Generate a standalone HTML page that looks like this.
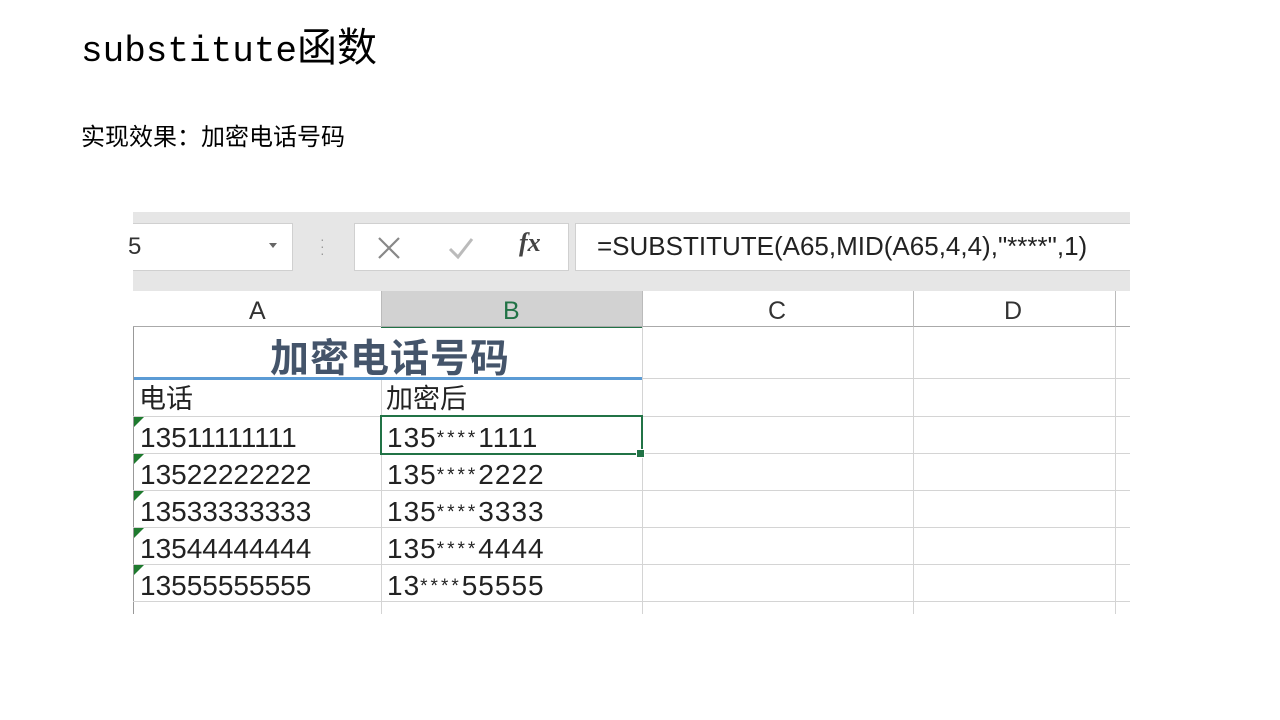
<!DOCTYPE html>
<html><head><meta charset="utf-8"><style>
body{margin:0;width:1280px;height:720px;background:#fff;position:relative;overflow:hidden;font-family:"Liberation Sans","Noto Sans CJK SC",sans-serif}
.a{position:absolute;white-space:nowrap}
.hl{position:absolute;height:1px;background:#d4d4d4}
.vl{position:absolute;width:1px;background:#d4d4d4}
.tri{position:absolute;width:0;height:0;border-top:10px solid #1e7a2e;border-right:10px solid transparent;left:134px}
.n{font-size:28px;color:#222;line-height:37px}
.s{font-size:19px;vertical-align:3px;letter-spacing:3px}
.b{letter-spacing:1px}
#clip{position:absolute;left:0;top:0;width:1130px;height:720px;overflow:hidden}
</style></head><body>
<div class="a" style="left:81px;top:15px;font-family:'Liberation Mono','Noto Sans CJK SC',monospace;font-size:36px;color:#000">substitute<span style="font-size:40px">函数</span></div>
<div class="a" style="left:81px;top:117px;font-size:24px;color:#000">实现效果：加密电话号码</div>
<div id="clip">
<div class="a" style="left:133px;top:212px;width:997px;height:79px;background:#e6e6e6"></div>
<div class="a" style="left:133px;top:223px;width:159px;height:46px;background:#fff;border:1px solid #d0d0d0;border-left:none"></div>
<div class="a" style="left:128px;top:233px;font-size:24px;color:#333">5</div>
<div class="a" style="left:269px;top:243px;border-top:5px solid #666;border-left:4px solid transparent;border-right:4px solid transparent"></div>
<div class="a" style="left:320px;top:236px;color:#999;font-size:14px;line-height:7px">·<br>·<br>·</div>
<div class="a" style="left:354px;top:223px;width:213px;height:46px;background:#fff;border:1px solid #d0d0d0"></div>
<svg class="a" style="left:376px;top:235px" width="26" height="26"><path d="M3 3L23 23M23 3L3 23" stroke="#888" stroke-width="2.2"/></svg>
<svg class="a" style="left:447px;top:235px" width="28" height="26"><path d="M3 14L11 22L25 4" stroke="#bbb" stroke-width="3" fill="none"/></svg>
<div class="a" style="left:519px;top:228px;font-size:26px;color:#444;font-family:'Liberation Serif',serif;font-style:italic;font-weight:bold">fx</div>
<div class="a" style="left:575px;top:223px;width:600px;height:46px;background:#fff;border:1px solid #d0d0d0"></div>
<div class="a" style="left:597px;top:231px;font-size:26px;color:#222">=SUBSTITUTE(A65,MID(A65,4,4),"****",1)</div>

<div class="a" style="left:381px;top:291px;width:261px;height:35px;background:#d2d2d2;border-bottom:2px solid #217346"></div>
<div class="a" style="left:133px;top:326px;width:997px;height:1px;background:#aaa"></div>
<div class="a" style="left:249px;top:297px;font-size:25px;color:#333">A</div>
<div class="a" style="left:503px;top:297px;font-size:25px;color:#217346">B</div>
<div class="a" style="left:768px;top:297px;font-size:25px;color:#333">C</div>
<div class="a" style="left:1004px;top:297px;font-size:25px;color:#333">D</div>
<div class="vl" style="left:381px;top:291px;height:36px;background:#bbb"></div>
<div class="vl" style="left:642px;top:291px;height:36px;background:#bbb"></div>
<div class="vl" style="left:913px;top:291px;height:36px;background:#bbb"></div>
<div class="vl" style="left:1115px;top:291px;height:36px;background:#bbb"></div>

<div class="vl" style="left:133px;top:327px;height:287px;background:#999"></div>
<div class="vl" style="left:381px;top:379px;height:235px"></div>
<div class="vl" style="left:642px;top:327px;height:287px"></div>
<div class="vl" style="left:913px;top:327px;height:287px"></div>
<div class="vl" style="left:1115px;top:327px;height:287px"></div>
<div class="hl" style="left:642px;top:378px;width:488px"></div>
<div class="a" style="left:134px;top:377px;width:508px;height:3px;background:#5b9bd5"></div>
<div class="hl" style="left:133px;top:416px;width:997px"></div>
<div class="hl" style="left:133px;top:453px;width:997px"></div>
<div class="hl" style="left:133px;top:490px;width:997px"></div>
<div class="hl" style="left:133px;top:527px;width:997px"></div>
<div class="hl" style="left:133px;top:564px;width:997px"></div>
<div class="hl" style="left:133px;top:601px;width:997px"></div>

<div class="a" style="left:270px;top:328px;font-size:39px;font-weight:bold;color:#44546a;letter-spacing:1px">加密电话号码</div>
<div class="a n" style="left:139px;top:381px;font-size:27px">电话</div>
<div class="a n" style="left:386px;top:381px;font-size:27px">加密后</div>

<div class="tri" style="top:417px"></div><div class="tri" style="top:454px"></div><div class="tri" style="top:491px"></div><div class="tri" style="top:528px"></div><div class="tri" style="top:565px"></div>
<div class="a n" style="left:140px;top:419px">13511111111</div>
<div class="a n" style="left:140px;top:456px">13522222222</div>
<div class="a n" style="left:140px;top:493px">13533333333</div>
<div class="a n" style="left:140px;top:530px">13544444444</div>
<div class="a n" style="left:140px;top:567px">13555555555</div>
<div class="a n b" style="left:387px;top:419px">135<span class="s">****</span>1111</div>
<div class="a n b" style="left:387px;top:456px">135<span class="s">****</span>2222</div>
<div class="a n b" style="left:387px;top:493px">135<span class="s">****</span>3333</div>
<div class="a n b" style="left:387px;top:530px">135<span class="s">****</span>4444</div>
<div class="a n b" style="left:387px;top:567px">13<span class="s">****</span>55555</div>

<div class="a" style="left:380px;top:415px;width:259px;height:36px;border:2px solid #217346"></div>
<div class="a" style="left:636px;top:449px;width:7px;height:7px;background:#217346;border:1px solid #fff"></div>
</div>
</body></html>
